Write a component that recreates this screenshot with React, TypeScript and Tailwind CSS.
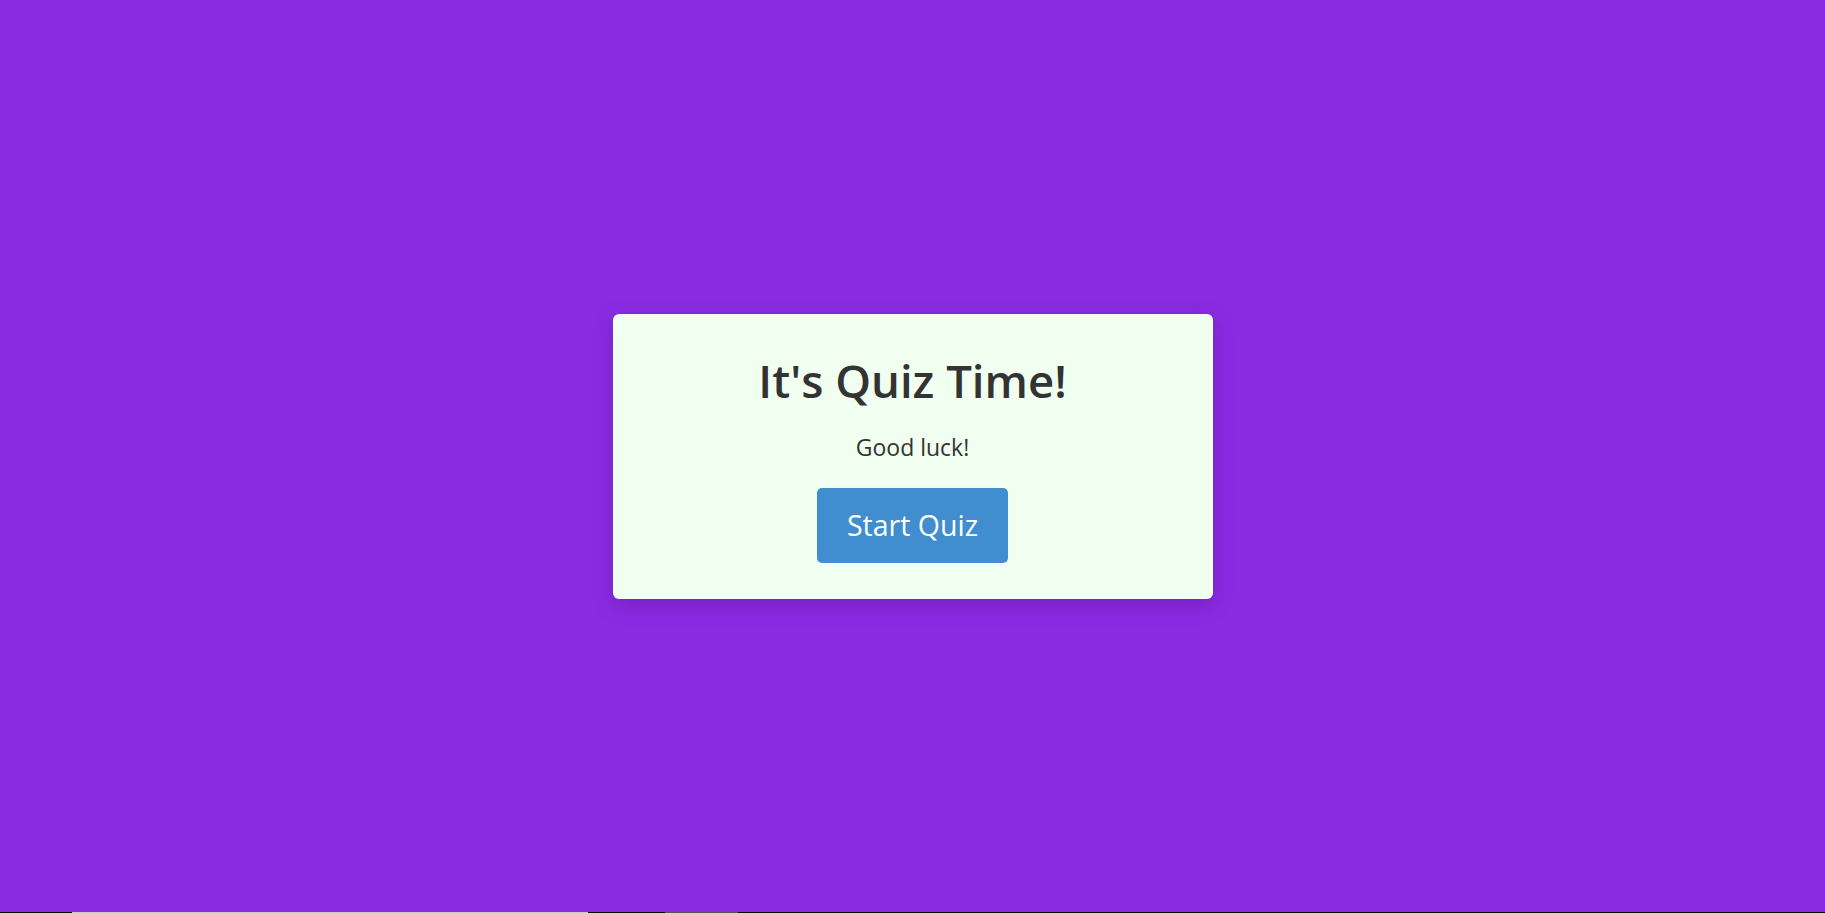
import React from "react";

export default function App() {
  return (
    <div className="flex h-[913px] w-full flex-col bg-[#8a2be2]" style={{ fontFamily: '"Open Sans", "Noto Sans", sans-serif' }}>
      <main className="flex flex-1 items-center justify-center">
        <div className="flex h-[285px] w-[600px] flex-col items-center rounded-[6px] bg-[#f0fff0] pt-[39px] shadow-[0_6px_20px_rgba(60,0,110,0.25)]">
          <h1 className="text-[45.5px] font-semibold leading-[1.2] text-[#333]">It's Quiz Time!</h1>
          <p className="mt-[27px] text-[23px] leading-[1.2] text-[#333]">Good luck!</p>
          <button className="mt-[26px] flex h-[75px] w-[191px] items-center justify-center rounded-[5px] bg-[#408ecf] text-[28.5px] text-white">
            Start Quiz
          </button>
        </div>
      </main>
      <div className="flex h-px w-full bg-black">
        <div className="ml-[72px] w-[516px] bg-[#c8c8c8]" />
        <div className="ml-[77px] w-[73px] bg-[#555]" />
      </div>
    </div>
  );
}
